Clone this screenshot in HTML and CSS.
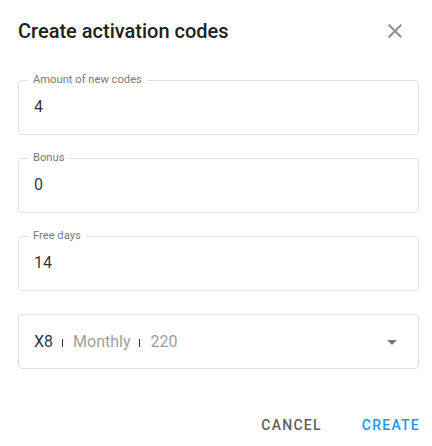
FILE: index.html
```html
<!DOCTYPE html>
<html lang="en">
<head>
    <meta charset="UTF-8">
    <meta name="viewport" content="width=device-width, initial-scale=1.0">
    <title>Create activation codes</title>
    <link rel="stylesheet" href="styles.css">
</head>
<body>
    <div class="dialog">
        <div class="dialog-header">
            <h2 class="dialog-title">Create activation codes</h2>
            <button class="close-btn" aria-label="Close">
                <svg viewBox="0 0 24 24" width="24" height="24"><path d="M19 6.41L17.59 5 12 10.59 6.41 5 5 6.41 10.59 12 5 17.59 6.41 19 12 13.41 17.59 19 19 17.59 13.41 12z"/></svg>
            </button>
        </div>
        <form class="dialog-body">
            <fieldset class="field">
                <legend>Amount of new codes</legend>
                <div class="value">4</div>
            </fieldset>
            <fieldset class="field">
                <legend>Bonus</legend>
                <div class="value">0</div>
            </fieldset>
            <fieldset class="field">
                <legend>Free days</legend>
                <div class="value">14</div>
            </fieldset>
            <div class="select">
                <div class="select-text">
                    <span class="plan">X8</span>
                    <span class="sep"></span>
                    <span class="muted">Monthly</span>
                    <span class="sep"></span>
                    <span class="muted">220</span>
                </div>
                <svg class="arrow" viewBox="0 0 24 24" width="24" height="24"><path d="M7 10l5 5 5-5z"/></svg>
            </div>
        </form>
        <div class="dialog-actions">
            <button class="text-btn cancel">Cancel</button>
            <button class="text-btn create">Create</button>
        </div>
    </div>
</body>
</html>
```

FILE: styles.css
```css
body {
    margin: 0;
    padding: 0;
    background: #fff;
    font-family: Roboto, "Liberation Sans", Arial, sans-serif;
    color: rgba(0, 0, 0, 0.87);
}
.dialog {
    padding: 15px 13px 0 18px;
}
.dialog-header {
    display: flex;
    align-items: center;
    justify-content: space-between;
}
.dialog-title {
    margin: 0;
    font-size: 20px;
    font-weight: 500;
    line-height: 32px;
    color: #212121;
}
.close-btn {
    display: flex;
    background: none;
    border: none;
    padding: 0;
    margin-right: 12px;
    cursor: pointer;
    fill: #8f8f8f;
}
.dialog-body {
    margin-top: 26px;
    display: flex;
    flex-direction: column;
    gap: 16px;
}
.field {
    margin: 0;
    min-width: 0;
    border: 1px solid #e0e0e0;
    border-radius: 4px;
    padding: 0 15px 15px;
}
.field legend {
    margin-left: -6px;
    padding: 0 5px;
    font-size: 11.2px;
    line-height: 14px;
    color: #7a7a7a;
}
.value {
    padding-top: 8px;
    font-size: 16px;
    line-height: 24px;
    color: rgba(0, 0, 0, 0.82);
}
.select {
    display: flex;
    align-items: center;
    justify-content: space-between;
    height: 53px;
    margin-top: 7px;
    border: 1px solid #e0e0e0;
    border-radius: 4px;
    padding: 0 14px 0 15px;
}
.select-text {
    display: flex;
    align-items: center;
    font-size: 16px;
    line-height: 24px;
}
.plan {
    color: rgba(0, 0, 0, 0.82);
}
.sep {
    display: inline-block;
    width: 1px;
    height: 8px;
    margin: 2px 10px 0 9px;
    background: #333;
}
.muted {
    color: #a0a0a0;
}
.arrow {
    fill: #7a7a7a;
}
.dialog-actions {
    display: flex;
    justify-content: flex-end;
    gap: 24px;
    margin-top: 38px;
}
.text-btn {
    height: 36px;
    padding: 0 8px;
    background: none;
    border: none;
    font-family: inherit;
    font-size: 14px;
    font-weight: 500;
    letter-spacing: 1.25px;
    text-transform: uppercase;
    cursor: pointer;
}
.cancel {
    color: #5f5f5f;
}
.create {
    margin-right: -9px;
    color: #2196f3;
}
```
